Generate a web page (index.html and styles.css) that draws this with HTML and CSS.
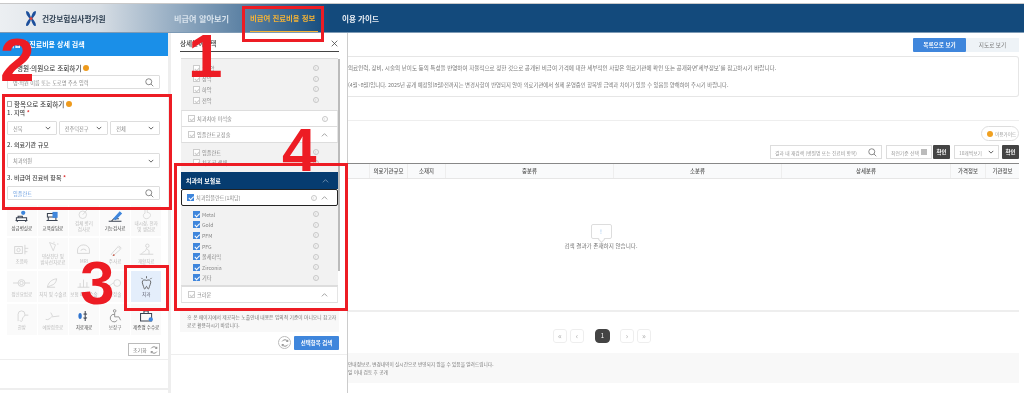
FILE: index.html
```html
<!DOCTYPE html>
<html lang="ko">

<head>
    <meta charset="UTF-8">
    <meta name="viewport" content="width=device-width, initial-scale=1.0">
    <title>비급여 진료비용 정보</title>
    <link rel="stylesheet" href="styles.css">
</head>

<body>
    <header class="topbar">
        <div class="brand">
            <svg class="brand-logo" viewBox="0 0 12 18">
                <path d="M1 1C4 1 5 5 6 8C7 5 8 1 11 1C12 4 9 7 7.500 9C9 11 12 14 11 17C8 17 7 13 6 10C5 13 4 17 1 17C0 14 3 11 4.500 9C3 7 0 4 1 1Z" fill="#1c4f9c"/>
                <circle cx="6" cy="9" r="1.600" fill="#d8443c"/>
            </svg>
            <span>건강보험심사평가원</span>
        </div>
        <nav class="nav">
            <a class="nav-a">비급여 알아보기</a>
            <a class="nav-b">비급여 진료비용 정보</a>
            <a class="nav-c">이용 가이드</a>
        </nav>
    </header>

    <div class="layout">
        <aside class="search-panel">
            <div class="search-head">비급여 진료비용 상세 검색</div>
            <div class="search-body">
                <div class="group-title title-first">병원·의원으로 조회하기 <i class="help-dot"></i></div>
                <div class="field field-input">
                    <span>병·의원 이름 또는 도로명 주소 입력</span>
                    <svg class="search-icon" viewBox="0 0 12 12"><circle cx="5" cy="5" r="4"/><path d="M8 8l3 3"/></svg>
                </div>

                <div class="group-title title-second"><i class="list-icon"></i>항목으로 조회하기 <i class="help-dot"></i></div>
                <div class="label">1. 지역 <b>*</b></div>
                <div class="select-row">
                    <div class="field">신북<svg class="chevron" viewBox="0 0 8 5"><path d="M1 1l3 3 3-3"/></svg></div>
                    <div class="field">전주덕진구<svg class="chevron" viewBox="0 0 8 5"><path d="M1 1l3 3 3-3"/></svg></div>
                    <div class="field">전체<svg class="chevron" viewBox="0 0 8 5"><path d="M1 1l3 3 3-3"/></svg></div>
                </div>
                <div class="label label-gap">2. 의료기관 규모</div>
                <div class="field field-wide">치과의원<svg class="chevron" viewBox="0 0 8 5"><path d="M1 1l3 3 3-3"/></svg></div>
                <div class="label label-gap">3. 비급여 진료비 항목 <b>*</b></div>
                <div class="field field-input field-blue">
                    <span>임플란트</span>
                    <svg class="search-icon" viewBox="0 0 12 12"><circle cx="5" cy="5" r="4"/><path d="M8 8l3 3"/></svg>
                </div>

                <div class="category-grid">
                    <div class="category on">
                        <svg viewBox="0 0 20 16"><path d="M3 12h14M4 12V9h12v3M5 14v-2M15 14v-2M6 9V7h5v2"/><circle cx="12" cy="3" r="2.500" fill="#3f86dc" stroke="none"/></svg>
                        <span>상급병실료</span>
                    </div>
                    <div class="category on">
                        <svg viewBox="0 0 20 16"><path d="M4 4h9v4H4zM3 12h13M5 12V8M14 12V8"/><rect x="10" y="2" width="6" height="7" fill="#3f86dc" stroke="none"/></svg>
                        <span>교육상담료</span>
                    </div>
                    <div class="category two">
                        <svg viewBox="0 0 20 16"><circle cx="9" cy="9" r="5"/><path d="M9 9l6-7"/></svg>
                        <span>검체 병리<br>검사료</span>
                    </div>
                    <div class="category on">
                        <svg viewBox="0 0 20 16"><path d="M2 13h15M5 13l3-3h6"/><path d="M8 10l7-8 2 2-7 7z" fill="#3f86dc" stroke="#3f86dc"/></svg>
                        <span>기능검사료</span>
                    </div>
                    <div class="category two">
                        <svg viewBox="0 0 20 16"><path d="M8 14C5 12 5 8 8 7V3c0-2 3-2 3 0v3c4 0 5 3 4 5-1 2-4 4-7 3z"/></svg>
                        <span>내시경, 천자<br>및 생검료</span>
                    </div>

                    <div class="category">
                        <svg viewBox="0 0 20 16"><rect x="2" y="4" width="9" height="8"/><circle cx="6.500" cy="8" r="2"/><path d="M14 2v11M14 6h4M14 10h3"/></svg>
                        <span>초음파</span>
                    </div>
                    <div class="category two">
                        <svg viewBox="0 0 20 16"><path d="M6 2l5 11 3-8zM12 1v2M16 4h2"/></svg>
                        <span>영상진단 및<br>방사선치료료</span>
                    </div>
                    <div class="category">
                        <svg viewBox="0 0 20 16"><path d="M3 12V8a7 6 0 0 1 14 0v4zM7 9a3 2 0 0 1 6 0"/></svg>
                        <span>MRI</span>
                    </div>
                    <div class="category">
                        <svg viewBox="0 0 20 16"><path d="M5 13l8-9 3 3-9 8zM14 3l3 3"/><circle cx="8" cy="14" r="1" fill="#c8503c" stroke="none"/></svg>
                        <span>주사료</span>
                    </div>
                    <div class="category">
                        <svg viewBox="0 0 20 16"><circle cx="11" cy="3" r="2"/><path d="M2 13h16M4 13c2-4 5-2 6-7l3 3v4"/></svg>
                        <span>재활치료</span>
                    </div>

                    <div class="category">
                        <svg viewBox="0 0 20 16"><circle cx="10" cy="8" r="4"/><circle cx="10" cy="8" r="2"/><path d="M0 8h6M14 8h6"/></svg>
                        <span>정신요법료</span>
                    </div>
                    <div class="category">
                        <svg viewBox="0 0 20 16"><path d="M4 13c1-5 4-9 11-10-1 5-3 7-7 8zM4 13h9"/></svg>
                        <span>처치 및 수술료</span>
                    </div>
                    <div class="category">
                        <svg viewBox="0 0 20 16"><path d="M3 13h14M6 13V8M10 13V4M14 13V7"/></svg>
                        <span>보험 이외 수술</span>
                    </div>
                    <div class="category">
                        <svg viewBox="0 0 20 16"><circle cx="12" cy="8" r="4"/><path d="M2 11c3 0 4-3 6-3"/></svg>
                        <span>교정술</span>
                    </div>
                    <div class="category picked">
                        <svg viewBox="0 0 20 16"><path d="M5 7c0-3 3-3 5-2 2-1 5-1 5 2 0 2-1 3-1.500 5-.3 1.500-.8 3-1.500 3-1 0-1-3-2-3s-1 3-2 3c-.7 0-1.200-1.500-1.500-3C6 10 5 9 5 7z"/><path d="M4 2l1.500 1.500M10 0v2.500M16 2l-1.500 1.500"/></svg>
                        <span>치과</span>
                    </div>

                    <div class="category">
                        <svg viewBox="0 0 20 16"><path d="M6 14V6a4 4 0 1 1 8 0c0 3-3 3-3 6s-2 3-3 1M14 7h4"/></svg>
                        <span>한방</span>
                    </div>
                    <div class="category">
                        <svg viewBox="0 0 20 16"><path d="M2 12c3 1 5-1 7-3l9-1M8 4l2 4"/></svg>
                        <span>예방접종료</span>
                    </div>
                    <div class="category on">
                        <svg viewBox="0 0 20 16"><ellipse cx="6" cy="8" rx="2" ry="3.500" fill="#2f74d0" stroke="none"/><path d="M12 2v12M10 6c2-1 3-1 4 0M10 10c2 1 3 1 4 0"/></svg>
                        <span>치료재료</span>
                    </div>
                    <div class="category on-soft">
                        <svg viewBox="0 0 20 16"><circle cx="9" cy="2" r="1.500"/><path d="M9 4v5h5l2 4M9 6a4.500 4.500 0 1 0 3 7"/></svg>
                        <span>보장구</span>
                    </div>
                    <div class="category on">
                        <svg viewBox="0 0 20 16"><path d="M3 5h13v9H3zM7 5V2h5v3"/><circle cx="15" cy="12" r="2.500" fill="#3f86dc" stroke="none"/></svg>
                        <span>제증명 수수료</span>
                    </div>
                </div>

                <div class="reset-row">
                    <div class="reset-button">초기화
                        <svg viewBox="0 0 10 10"><path d="M8.500 3A4 4 0 0 0 1.500 3M1.500 7a4 4 0 0 0 7 0M8.500 1v2H6.500M1.500 9V7h2"/></svg>
                    </div>
                </div>
            </div>
            <div class="search-foot"></div>
        </aside>

        <section class="detail-panel">
            <div class="detail-head">
                <span>상세분야선택</span>
                <svg viewBox="0 0 10 10"><path d="M1 1l8 8M9 1l-8 8"/></svg>
            </div>
            <div class="detail-list">
                <div class="sub-list sub-a">
                    <div class="sub-item"><i class="check"></i>1/3악<i class="info">!</i></div>
                    <div class="sub-item"><i class="check"></i>상악<i class="info">!</i></div>
                    <div class="sub-item"><i class="check"></i>하악<i class="info">!</i></div>
                    <div class="sub-item"><i class="check"></i>전악<i class="info">!</i></div>
                </div>
                <div class="row-item"><i class="check"></i>치과치아 미석술<i class="info">!</i></div>
                <div class="row-item row-tall"><i class="check"></i>임플란트교정술<svg class="caret" viewBox="0 0 10 6"><path d="M1 5l4-4 4 4"/></svg></div>
                <div class="sub-list sub-b">
                    <div class="sub-item"><i class="check"></i>임플란트<i class="info">!</i></div>
                    <div class="sub-item"><i class="check"></i>치조골 생체<i class="info">!</i></div>
                </div>
                <div class="navy-row">치과의 보철료<svg class="caret" viewBox="0 0 10 6"><path d="M1 5l4-4 4 4"/></svg></div>
                <div class="picked-row"><i class="check checked"></i>치과임플란트(1치당)<i class="info">!</i><svg class="caret" viewBox="0 0 10 6"><path d="M1 5l4-4 4 4"/></svg></div>
                <div class="sub-list sub-c">
                    <div class="sub-item"><i class="check checked"></i>Metal<i class="info">!</i></div>
                    <div class="sub-item"><i class="check checked"></i>Gold<i class="info">!</i></div>
                    <div class="sub-item"><i class="check checked"></i>PFM<i class="info">!</i></div>
                    <div class="sub-item"><i class="check checked"></i>PFG<i class="info">!</i></div>
                    <div class="sub-item"><i class="check checked"></i>올세라믹<i class="info">!</i></div>
                    <div class="sub-item"><i class="check checked"></i>Zirconia<i class="info">!</i></div>
                    <div class="sub-item"><i class="check checked"></i>기타<i class="info">!</i></div>
                </div>
                <div class="row-item row-tall"><i class="check"></i>크라운<svg class="caret" viewBox="0 0 10 6"><path d="M1 5l4-4 4 4"/></svg></div>
                <div class="scroll-thumb"></div>
            </div>
            <div class="detail-note">※ 본 페이지에서 제공하는 노출안내 내용은 임의적 기준이 아니오니 참고자<br>료로 활용하시기 바랍니다.</div>
            <div class="detail-actions">
                <div class="refresh"><svg viewBox="0 0 10 10"><path d="M8.500 3A4 4 0 0 0 1.500 3M1.500 7a4 4 0 0 0 7 0M8.500 1v2H6.500M1.500 9V7h2"/></svg></div>
                <div class="apply-button">선택항목 검색</div>
            </div>
            <div class="detail-foot"></div>
        </section>

        <main class="content">
            <div class="tabs">
                <div class="tab tab-on">목록으로 보기</div>
                <div class="tab">지도로 보기</div>
            </div>
            <div class="info-box">
                <p>의료인력, 장비, 시술의 난이도 등의 특성을 반영하여 자율적으로 정한 것으로 공개된 비급여 가격에 대한 세부적인 사항은 의료기관에 확인 또는 공개화면'세부정보'를 참고하시기 바랍니다.</p>
                <p class="info-second">(4월~8월)입니다. 2025년 공개 예정일(8월)전까지는 변경사항이 반영되지 않아 의료기관에서 실제 운영중인 항목별 금액과 차이가 있을 수 있음을 양해하여 주시기 바랍니다.</p>
            </div>
            <div class="content-rule"></div>
            <div class="guide-row">
                <div class="guide-pill"><i></i>이용가이드</div>
            </div>
            <div class="filter-row">
                <div class="filter filter-search">결과 내 재검색 (병원명 또는 진료비 항목)
                    <svg class="search-icon" viewBox="0 0 12 12"><circle cx="5" cy="5" r="4"/><path d="M8 8l3 3"/></svg>
                </div>
                <div class="filter filter-date">최연기준 선택<i class="date-icon"></i></div>
                <div class="dark-button">확인</div>
                <div class="filter filter-count">10개씩보기<svg class="chevron" viewBox="0 0 8 5"><path d="M1 1l3 3 3-3"/></svg></div>
                <div class="dark-button">확인</div>
            </div>
            <div class="table-head">
                <div></div>
                <div>의료기관규모</div>
                <div>소재지</div>
                <div>중분류</div>
                <div>소분류</div>
                <div>상세분류</div>
                <div>가격정보</div>
                <div>기관정보</div>
            </div>
            <div class="empty">
                <div class="empty-bubble">!</div>
                <div class="empty-text">검색 결과가 존재하지 않습니다.</div>
            </div>
            <div class="pager">
                <div class="page-btn">«</div>
                <div class="page-btn">‹</div>
                <div class="page-btn page-now">1</div>
                <div class="page-btn">›</div>
                <div class="page-btn">»</div>
            </div>
            <div class="notice">
                <p>안내정보로, 변경내역이 실시간으로 반영되지 않을 수 있음을 알려드립니다.</p>
                <p>일 이내 검토 후 공개</p>
            </div>
        </main>
    </div>

    <!-- red marks drawn on top of the capture -->
    <div class="mark mark-box-1"></div>
    <div class="mark mark-box-2"></div>
    <div class="mark mark-box-3"></div>
    <div class="mark mark-box-4"></div>
    <div class="mark-num num-1">1</div>
    <div class="mark-num num-2">2</div>
    <div class="mark-num num-3">3</div>
    <div class="mark-num num-4">4</div>
</body>

</html>
```

FILE: styles.css
```css
* {
    box-sizing: border-box;
}

body {
    position: relative;
    width: 1024px;
    height: 410px;
    margin: 0;
    padding-top: 3px;
    overflow: hidden;
    background-color: white;
    color: #666;
    font-family: "Noto Sans CJK KR", "Noto Sans", sans-serif;
    font-size: 6.5px;
    filter: blur(0.35px);
}

p {
    margin: 0;
}

i {
    font-style: normal;
}

.topbar {
    display: flex;
    height: 30px;
    background: linear-gradient(90deg, #eceff2 0, #d6dde4 100px, #7f9cb7 200px, #134a7c 330px);
    border-top: 1px solid #c9c9c9;
    border-bottom: 1px solid #7d9ab5;
}

.brand {
    display: flex;
    align-items: center;
    width: 174px;
    padding-left: 25px;
    color: #2c3e50;
    font-size: 7.7px;
    font-weight: 700;
}

.brand-logo {
    width: 12px;
    height: 17px;
    margin-right: 5px;
}

.nav {
    display: flex;
    color: #d7e2ec;
    font-size: 8.2px;
    font-weight: 700;
}

.nav a {
    display: flex;
    align-items: center;
    height: 100%;
    white-space: nowrap;
}

.nav-a {
    width: 76px;
}

.nav-b {
    width: 68px;
    margin-right: 24px;
    color: #f5b335;
    font-size: 7.4px;
    border-bottom: 1px solid #f5b335;
}

.nav-c {
    color: #e8eef4;
    font-size: 7.6px;
}

.layout {
    display: flex;
    height: 360px;
}

.search-panel {
    width: 171px;
    border-right: 3px solid #eee;
}

.search-head {
    height: 23px;
    padding-left: 8px;
    background-color: #1a8fe8;
    color: white;
    font-size: 7px;
    font-weight: 700;
    line-height: 23px;
}

.search-body {
    padding: 0 8px 0 7px;
}

.group-title {
    display: flex;
    align-items: center;
    gap: 2px;
    height: 10px;
    color: #444;
    font-size: 6.6px;
    font-weight: 500;
}

.title-first {
    margin-top: 7px;
    padding-left: 10px;
}

.title-second {
    margin-top: 10px;
}

.help-dot {
    width: 6px;
    height: 6px;
    background-color: #ee9a1c;
    border-radius: 50%;
}

.list-icon {
    width: 5px;
    height: 6px;
    border: 1px solid #aaa;
}

.label {
    height: 8px;
    margin-bottom: 4px;
    color: #444;
    font-size: 6px;
    font-weight: 500;
    line-height: 8px;
}

.label b {
    color: #d33;
}

.label-gap {
    margin-top: 6px;
}

.field {
    display: flex;
    flex: 1;
    align-items: center;
    justify-content: space-between;
    height: 14px;
    padding: 0 5px;
    border: 1px solid #ddd;
    border-radius: 1px;
    color: #888;
    font-size: 5.2px;
}

.field-input {
    margin-top: 2px;
}

.field-blue {
    color: #6d9fe0;
}

.select-row {
    display: flex;
    gap: 2px;
}

.field-wide {
    height: 15px;
}

.search-icon {
    width: 9px;
    height: 9px;
    fill: none;
    stroke: #666;
    stroke-width: 1;
}

.chevron {
    width: 6px;
    height: 4px;
    fill: none;
    stroke: #555;
    stroke-width: 1.2;
}

.category-grid {
    display: grid;
    grid-template-columns: repeat(5, 29.6px);
    grid-auto-rows: 31px;
    gap: 2px 1.5px;
    margin-top: 5px;
}

.category {
    display: flex;
    flex-direction: column;
    align-items: center;
    padding-top: 5px;
    background-color: #fafafa;
    color: #bbb;
    font-size: 4.5px;
    line-height: 5.5px;
    text-align: center;
    white-space: nowrap;
}

.category svg {
    flex: none;
    width: 17px;
    height: 14px;
    margin-bottom: 2px;
    fill: none;
    stroke: #d2d2d2;
    stroke-width: 1;
}

.category.two {
    padding-top: 3px;
}

.category.two svg {
    height: 12px;
    margin-bottom: 1px;
}

.category.on {
    color: #444;
}

.category.on svg {
    stroke: #3a4250;
    stroke-width: 1.2;
}

.category.on-soft {
    color: #777;
}

.category.on-soft svg {
    stroke: #888;
}

.category.picked {
    background-color: #e4eefb;
    color: #556;
}

.category.picked svg {
    stroke: #555;
}

.reset-row {
    display: flex;
    justify-content: flex-end;
    margin-top: 8px;
}

.reset-button {
    display: flex;
    align-items: center;
    justify-content: space-between;
    width: 32px;
    height: 13px;
    padding: 0 1px 0 4px;
    border: 1px solid #bbb;
    color: #777;
    font-size: 5px;
}

.reset-button svg,
.refresh svg {
    width: 8px;
    height: 8px;
    fill: none;
    stroke: #777;
    stroke-width: 1;
}

.search-foot {
    height: 31px;
    margin-top: 3px;
    border-top: 1px solid #eee;
    border-bottom: 2px solid #eee;
}

.detail-panel {
    width: 176px;
}

.detail-head {
    display: flex;
    align-items: center;
    justify-content: space-between;
    height: 19px;
    margin: 0 8px 0 9px;
    padding: 2px 0 0;
    border-bottom: 1px solid #444;
    color: #333;
    font-size: 6.6px;
    font-weight: 500;
}

.detail-head svg {
    width: 7px;
    height: 7px;
    margin-right: 1px;
    fill: none;
    stroke: #444;
    stroke-width: 1.1;
}

.detail-list {
    position: relative;
    height: 247px;
    margin: 6px 9px 0 10px;
    border-top: 1px solid #ddd;
}

.scroll-thumb {
    position: absolute;
    top: 0;
    right: -2px;
    width: 2px;
    height: 212px;
    background-color: #bbb;
}

.sub-list {
    background-color: #f2f2f2;
    overflow: hidden;
}

.sub-a {
    height: 51px;
    padding-top: 4px;
}

.sub-b {
    height: 29px;
    padding-top: 4px;
}

.sub-c {
    height: 80px;
    padding-top: 3px;
    border-bottom: 1px solid #ddd;
}

.sub-item {
    display: flex;
    align-items: center;
    height: 10.6px;
    padding: 0 19px 0 12px;
    color: #888;
    font-size: 5.2px;
}

.row-item {
    display: flex;
    align-items: center;
    height: 16px;
    padding: 0 9px 0 6px;
    background-color: white;
    border-top: 1px solid #ddd;
    border-left: 1px solid #e5e5e5;
    border-right: 1px solid #e5e5e5;
    color: #888;
    font-size: 5.2px;
}

.row-tall {
    height: 17px;
    border-bottom: 1px solid #ddd;
}

.check {
    flex: none;
    position: relative;
    width: 7px;
    height: 7px;
    margin-right: 2px;
    background-color: white;
    border: 1px solid #ccc;
}

.check::after {
    content: "";
    position: absolute;
    left: 1.5px;
    top: 0;
    width: 1.5px;
    height: 3.5px;
    border-right: 1px solid #ccc;
    border-bottom: 1px solid #ccc;
    transform: rotate(45deg);
}

.check.checked {
    background-color: #3f86dc;
    border-color: #3f86dc;
}

.check.checked::after {
    border-color: white;
}

.info {
    flex: none;
    width: 6px;
    height: 6px;
    margin-left: auto;
    border: 1px solid #c8c8c8;
    border-radius: 50%;
    color: #bbb;
    font-size: 4px;
    line-height: 4px;
    text-align: center;
}

.caret {
    flex: none;
    width: 7px;
    height: 4px;
    margin-left: auto;
    fill: none;
    stroke: #777;
    stroke-width: 1;
}

.info + .caret {
    margin-left: 4px;
}

.navy-row {
    display: flex;
    align-items: center;
    height: 17px;
    padding: 0 9px 0 5px;
    background-color: #063c70;
    color: white;
    font-size: 6px;
    font-weight: 700;
}

.navy-row .caret {
    stroke: #9fb3c8;
}

.picked-row {
    display: flex;
    align-items: center;
    height: 17px;
    padding: 0 9px 0 5px;
    background-color: white;
    border: 1px solid #222;
    border-radius: 2px;
    color: #888;
    font-size: 5.2px;
}

.detail-note {
    height: 22px;
    margin: 5px 8px 0 9px;
    padding: 3px 7px;
    background-color: #f8f8f8;
    color: #777;
    font-size: 4.8px;
    line-height: 7.5px;
    white-space: nowrap;
}

.detail-actions {
    display: flex;
    align-items: center;
    justify-content: flex-end;
    gap: 3px;
    height: 17px;
    margin: 2px 8px 0 9px;
}

.detail-foot {
    margin-top: 3px;
    border-top: 1px solid #eee;
}

.refresh {
    display: flex;
    align-items: center;
    justify-content: center;
    width: 13px;
    height: 13px;
    border: 1px solid #bbb;
    border-radius: 50%;
}

.apply-button {
    width: 45px;
    height: 14px;
    background-color: #3f86dc;
    border-radius: 1px;
    color: white;
    font-size: 5.4px;
    font-weight: 700;
    line-height: 14px;
    text-align: center;
}

.content {
    width: 677px;
    height: 360px;
    padding-right: 5px;
    border-left: 1px solid #ccc;
}

.tabs {
    display: flex;
    justify-content: flex-end;
    margin-top: 5px;
}

.tab {
    width: 53px;
    height: 14px;
    background-color: #eef3f7;
    color: #777;
    font-size: 5.6px;
    line-height: 14px;
    text-align: center;
}

.tab-on {
    background-color: #3f86dc;
    border-radius: 1px;
    color: white;
    font-weight: 700;
}

.info-box {
    height: 41px;
    margin-top: 4px;
    padding: 7px 0 0;
    border: 1px solid #e6e6e6;
    border-left: 0;
    border-radius: 0 3px 3px 0;
    color: #777;
    font-size: 5.55px;
    line-height: 8px;
    white-space: nowrap;
}

.info-box .info-second {
    margin-top: 9px;
    font-size: 5.35px;
}

.content-rule {
    margin-top: 23px;
    border-top: 1px solid #eee;
}

.guide-row {
    display: flex;
    justify-content: flex-end;
    margin-top: 5px;
}

.guide-pill {
    display: flex;
    align-items: center;
    gap: 2px;
    width: 38px;
    height: 15px;
    padding-left: 5px;
    border: 1px solid #ddd;
    border-radius: 8px;
    color: #999;
    font-size: 4.6px;
}

.guide-pill i {
    width: 6px;
    height: 6px;
    background-color: #f0a020;
    border-radius: 50%;
}

.filter-row {
    display: flex;
    justify-content: flex-end;
    height: 14px;
    margin-top: 4px;
}

.filter {
    display: flex;
    align-items: center;
    justify-content: space-between;
    height: 14px;
    padding: 0 4px;
    border: 1px solid #ddd;
    color: #999;
    font-size: 4.8px;
    white-space: nowrap;
}

.filter-search {
    width: 112px;
    margin-right: 4px;
}

.filter-date {
    width: 46px;
}

.filter-count {
    width: 45px;
    margin-left: 4px;
    margin-right: 2px;
}

.date-icon {
    width: 6px;
    height: 6px;
    background-color: #bbb;
}

.dark-button {
    width: 17px;
    height: 14px;
    margin-left: 1px;
    background-color: #444;
    border-radius: 1px;
    color: white;
    font-size: 5.5px;
    font-weight: 700;
    line-height: 14px;
    text-align: center;
}

.table-head {
    display: grid;
    grid-template-columns: 21px 38px 38px 168px 168px 169px 35px 34px;
    height: 16px;
    margin-top: 4px;
    background-color: #f9fafb;
    border-top: 1px solid #888;
    border-bottom: 1px solid #e6e6e6;
    color: #555;
    font-size: 5.4px;
    font-weight: 500;
    line-height: 14px;
    text-align: center;
}

.table-head div + div {
    border-left: 1px solid #eee;
}

.empty {
    display: flex;
    flex-direction: column;
    align-items: center;
    height: 133px;
    padding: 45px 165px 0 0;
    border-bottom: 2px solid #eee;
}

.empty-bubble {
    position: relative;
    width: 21px;
    height: 15px;
    border: 1px solid #ddd;
    border-radius: 2px;
    color: #8ab8e8;
    font-size: 6px;
    line-height: 13px;
    text-align: center;
}

.empty-bubble::after {
    content: "";
    position: absolute;
    left: 7px;
    top: 12px;
    width: 4px;
    height: 4px;
    background-color: white;
    border-right: 1px solid #ddd;
    border-bottom: 1px solid #ddd;
    transform: rotate(45deg);
}

.empty-text {
    margin-top: 3px;
    color: #777;
    font-size: 5.6px;
    line-height: 8px;
}

.pager {
    display: flex;
    height: 15px;
    margin-top: 17px;
    padding-left: 205px;
}

.page-btn {
    width: 14px;
    height: 14px;
    margin-right: 3px;
    border: 1px solid #eee;
    border-radius: 3px;
    color: #aaa;
    font-size: 8px;
    line-height: 11px;
    text-align: center;
}

.page-now {
    width: 15px;
    margin: 0 10px 0 8px;
    background-color: #444;
    border-color: #444;
    border-radius: 4px;
    color: white;
    font-size: 6px;
    line-height: 12px;
}

.notice {
    height: 30px;
    margin-top: 9px;
    padding-top: 8px;
    background-color: #f8f8f8;
    color: #777;
    font-size: 4.7px;
    line-height: 7.5px;
    white-space: nowrap;
}

.mark {
    position: absolute;
    border: 3px solid #ed1c24;
}

.mark-box-1 {
    left: 242px;
    top: 6px;
    width: 82px;
    height: 36px;
}

.mark-box-2 {
    left: 2px;
    top: 94px;
    width: 170px;
    height: 116px;
}

.mark-box-3 {
    left: 124px;
    top: 265px;
    width: 45px;
    height: 46px;
}

.mark-box-4 {
    left: 174px;
    top: 163px;
    width: 174px;
    height: 148px;
}

.mark-num {
    position: absolute;
    color: #ed1c24;
    font-family: "Liberation Sans", sans-serif;
    font-size: 62px;
    font-weight: 700;
    line-height: 62px;
}

.num-1 {
    left: 188px;
    top: 25px;
}

.num-2 {
    left: 0;
    top: 29px;
}

.num-3 {
    left: 80px;
    top: 252px;
}

.num-4 {
    left: 282px;
    top: 119px;
}
```
